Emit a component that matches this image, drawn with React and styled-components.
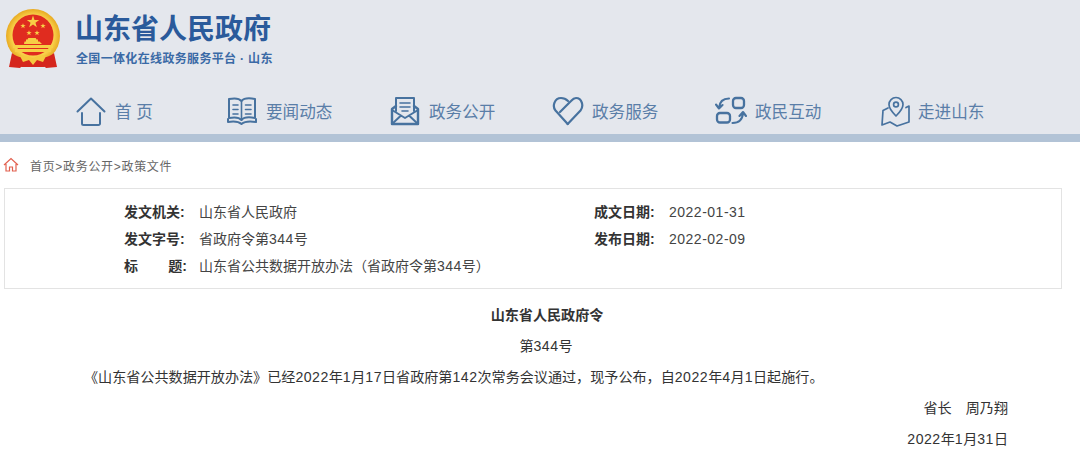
import React from "react";
import styled, { createGlobalStyle } from "styled-components";

const Global = createGlobalStyle`
  html, body { margin: 0; padding: 0; background: #fff; }
  body { font-family: "Liberation Sans", "Noto Sans CJK SC", sans-serif; overflow: hidden; }
`;
const Page = styled.div`width: 1080px; height: 455px; overflow: hidden; background: #fff;`;
const Header = styled.header`
  height: 134px; background: #e4e7ed; border-bottom: 8px solid #b2c3d6;
`;
const Brand = styled.div`display: flex; align-items: flex-start; height: 85px; padding: 9px 0 0 6px; box-sizing: border-box;`;
const BrandText = styled.div`display: flex; flex-direction: column; margin-left: 16px; padding-top: 3px;`;
const Title = styled.div`font-size: 28px; font-weight: 700; line-height: 36px; margin-left: -1px; color: #2a5a9b; white-space: nowrap;`;
const Subtitle = styled.div`font-size: 12px; font-weight: 700; line-height: 16px; margin-top: 3px; color: #3a6aa6; white-space: nowrap; letter-spacing: .34px;`;
const Nav = styled.nav`display: flex; padding: 10px 0 0 75px;`;
const NavItem = styled.div`display: flex; align-items: center; width: ${p => p.$w}px; height: 32px; color: #5a7ea8; font-size: 16.6px; white-space: nowrap;`;
const NavIcon = styled.svg`width: 32px; height: 32px; fill: none; stroke: #47729f; stroke-width: 2; stroke-linecap: round; stroke-linejoin: round; flex: none; margin-right: ${p => p.$gap}px;`;
const Crumbs = styled.div`display: flex; align-items: center; height: 46px; padding-left: 3px; font-size: 12px; letter-spacing: .68px; color: #666; white-space: nowrap;`;
const CrumbIcon = styled.svg`width: 16px; height: 16px; fill: none; stroke: #e2604f; stroke-width: 1.2; margin-right: 11px;`;
const Info = styled.section`
  display: grid; grid-template-columns: 470px 1fr; grid-auto-rows: 27px; align-items: center;
  width: 1058px; height: 101px; box-sizing: border-box; margin-left: 4px; padding: 8px 0 0 119px;
  border: 1px solid #e3e3e3; font-size: 14px; color: #444;
`;
const Cell = styled.div`display: flex; align-items: baseline; white-space: nowrap; grid-column: ${p => p.$span ? "1 / -1" : "auto"};`;
const Label = styled.b`display: flex; justify-content: space-between; width: 63px; margin-right: 12px; color: #333; flex: none;`;
const Num = styled.span`letter-spacing: .5px;`;
const Doc = styled.article`padding-top: 11px; font-size: 14.1px; color: #333; line-height: 31px;`;
const Heading = styled.h1`margin: 0; width: 1094px; font-size: 14.1px; font-weight: 700; line-height: 31px; text-align: center;`;
const Sub = styled.div`width: 1092px; text-align: center;`;
const Para = styled.p`margin: 0; padding-left: 84px; white-space: nowrap;`;
const Sign = styled.div`width: 1008px; text-align: right; white-space: pre;`;

const star = (x, y, r) => {
  const pts = [];
  for (let i = 0; i < 10; i++) {
    const a = -Math.PI / 2 + (i * Math.PI) / 5;
    const d = i % 2 ? r * 0.4 : r;
    pts.push(`${(x + d * Math.cos(a)).toFixed(2)},${(y + d * Math.sin(a)).toFixed(2)}`);
  }
  return pts.join(" ");
};

const Emblem = () => (
  <svg width="54" height="60" viewBox="0 0 54 60">
    <defs>
      <radialGradient id="g" cx="50%" cy="50%" r="50%">
        <stop offset="78%" stopColor="#f8d04a" />
        <stop offset="100%" stopColor="#e8aa22" />
      </radialGradient>
    </defs>
    <path d="M8 42 L6 56 L16 58 L38 58 L48 56 L46 42Z" fill="#d5261d" />
    <circle cx="27" cy="27" r="27" fill="url(#g)" />
    <circle cx="27" cy="26" r="20.5" fill="#e02c1f" />
    <g fill="#f7cf45">
      <polygon points={star(27, 13, 6.5)} />
      <polygon points={star(17, 17, 2.8)} />
      <polygon points={star(37, 17, 2.8)} />
      <polygon points={star(23, 24, 2.8)} />
      <polygon points={star(31, 24, 2.8)} />
      <path d="M18 35 h18 l-2.5-2.5 h-1.5 v-2 h-1.5 l-.8-1.5 h-7.4 l-.8 1.5 h-1.5 v2 h-1.5z" />
      <rect x="7" y="36" width="40" height="3" />
      <rect x="9" y="40" width="36" height="3" />
    </g>
    <path d="M6 44 C12 50 20 47 27 53 C34 47 42 50 48 44 L51 58 L40 59 L36 55 L18 55 L14 59 L3 58 Z" fill="#d5261d" />
    <path d="M14 47 C19 45 24 47 27 50 C30 47 35 45 40 47 L37 53 L31 51 L27 56 L23 51 L17 53 Z" fill="#f5c93f" />
  </svg>
);

const icons = {
  home: <><path d="M2.5 16.5 L16 3.5 L29.5 16.5" /><path d="M7 18 V28.5 a1.5 1.5 0 0 0 1.5 1.5 H23.5 a1.5 1.5 0 0 0 1.5-1.5 V18" /></>,
  book: <><path d="M3 4 C8 3 13 3 15.5 6 C18 3 24 3 29 4 V23 C24 22 18 22 15.5 25 C13 22 8 22 3 23Z" /><path d="M2 24 V27 C8 26 12 26 15.5 29 C19 26 24 26 30 27 V24" /><path d="M15.5 6 V25 M7 10 H12 M7 14.5 H12 M7 19 H12 M19.5 10 H25 M19.5 14.5 H25 M19.5 19 H25" strokeWidth="1.6" /></>,
  mail: <><path d="M7 16 V3 H25 V16" /><path d="M11 8 H21 M11 12 H21 M13 16 H19" strokeWidth="1.6" /><path d="M7 11 L3 14 V29 H29 V14 L25 11" strokeWidth="2.4" /><path d="M3 15 L16 23 L29 15 M3 29 L12 20.5 M29 29 L20 20.5" /></>,
  heart: <><path d="M15.7 29 L3.5 15.5 C0 11 2.5 3 9 3 C12 3 14 4 16 6" strokeWidth="2.2" /><path d="M8 17 L19 6 C21 3.8 23 3 24 3 C30 3 32 11 28.5 15.5 L15.7 29" strokeWidth="2.2" /></>,
  swap: <><rect x="18" y="3" width="11" height="10" rx="3" strokeWidth="2.3" /><rect x="2" y="18" width="13" height="9.5" rx="3" strokeWidth="2.3" /><path d="M14 3.5 C8 3.5 4.5 7 4 13 M1 9.5 L4 13.5 L7.5 10 M17.5 28 C24 28 27.5 24 28 18 M24.5 21 L28 17 L31 21" strokeWidth="2.1" /></>,
  map: <><path d="M16 21 C11 16 9 13 9 9.5 A7 7 0 0 1 23 9.5 C23 13 21 16 16 21Z" strokeWidth="1.7" /><circle cx="16" cy="9.5" r="2.4" strokeWidth="1.7" /><path d="M8 13 L3 15.5 L2 30 L10 27 L17 31 L29 27 V11 L26 12.5" strokeWidth="1.7" /></>,
};

const nav = [
  ["home", "首 页", 151, 8],
  ["book", "要闻动态", 163, 8],
  ["mail", "政务公开", 163, 8],
  ["heart", "政务服务", 163, 8],
  ["swap", "政民互动", 165, 8],
  ["map", "走进山东", 200, 6],
];

export default function App() {
  return (
    <Page>
      <Global />
      <Header>
        <Brand>
          <Emblem />
          <BrandText>
            <Title>山东省人民政府</Title>
            <Subtitle>全国一体化在线政务服务平台 · 山东</Subtitle>
          </BrandText>
        </Brand>
        <Nav>
          {nav.map(([k, t, w, g]) => (
            <NavItem key={k} $w={w}>
              <NavIcon viewBox="0 0 32 32" $gap={g}>{icons[k]}</NavIcon>
              {t}
            </NavItem>
          ))}
        </Nav>
      </Header>
      <Crumbs>
        <CrumbIcon viewBox="0 0 16 16">
          <path d="M1 8 L8 1.5 L15 8 M3 7 V14 H6.5 V10 H9.5 V14 H13 V7" />
        </CrumbIcon>
        首页&gt;政务公开&gt;政策文件
      </Crumbs>
      <Info>
        <Cell><Label>发文机关:</Label>山东省人民政府</Cell>
        <Cell><Label>成文日期:</Label><Num>2022-01-31</Num></Cell>
        <Cell><Label>发文字号:</Label><span>省政府令第<Num>344</Num>号</span></Cell>
        <Cell><Label>发布日期:</Label><Num>2022-02-09</Num></Cell>
        <Cell $span><Label><span>标</span><span>题:</span></Label><span>山东省公共数据开放办法（省政府令第<Num>344</Num>号）</span></Cell>
      </Info>
      <Doc>
        <Heading>山东省人民政府令</Heading>
        <Sub>第<Num>344</Num>号</Sub>
        <Para>《山东省公共数据开放办法》已经<Num>2022</Num>年<Num>1</Num>月<Num>17</Num>日省政府第<Num>142</Num>次常务会议通过，现予公布，自<Num>2022</Num>年<Num>4</Num>月<Num>1</Num>日起施行。</Para>
        <Sign>省长　周乃翔</Sign>
        <Sign><Num>2022</Num>年<Num>1</Num>月<Num>31</Num>日</Sign>
      </Doc>
    </Page>
  );
}
